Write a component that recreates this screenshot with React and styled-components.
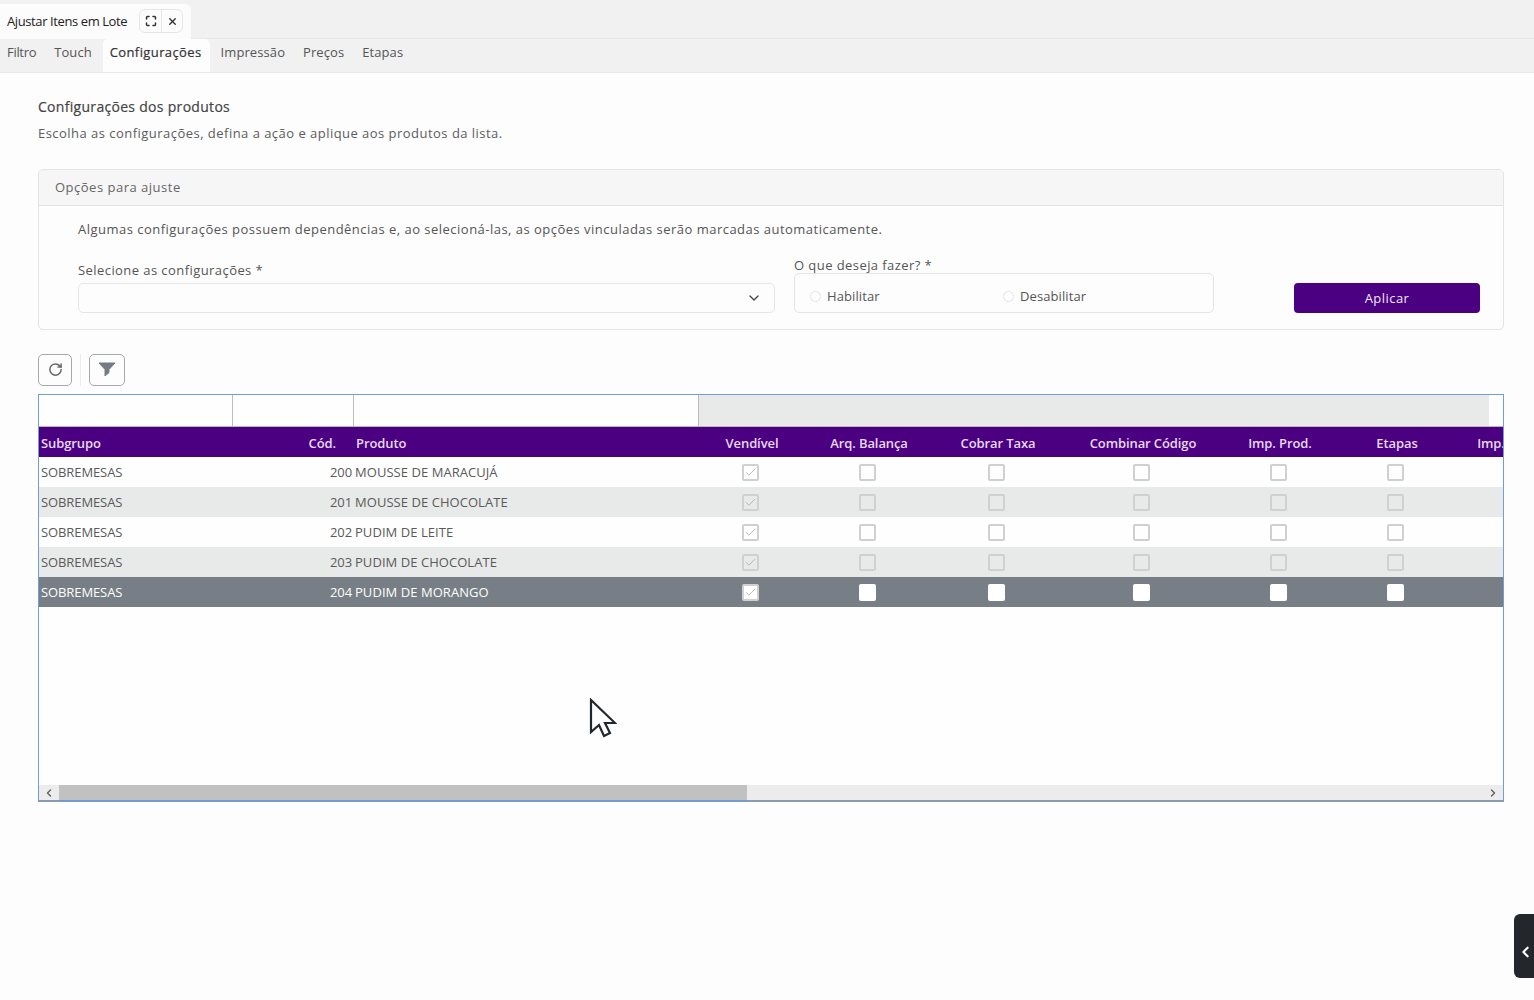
import React from 'react'
import styled, { createGlobalStyle } from 'styled-components'
import { ChevronDown, ChevronLeft, ChevronRight, Check, RotateCw, Maximize, X } from 'lucide-react'

const GlobalStyle = createGlobalStyle`
  html, body {
    margin: 0;
    padding: 0;
    background: #fdfdfd;
  }
  body {
    font-family: "Open Sans", "Liberation Sans", sans-serif;
    color: #444;
  }
  * { box-sizing: border-box; }
`

const columns = [
  { key: 'vendivel', label: 'Vendível', width: 104 },
  { key: 'arq', label: 'Arq. Balança', width: 130 },
  { key: 'taxa', label: 'Cobrar Taxa', width: 128 },
  { key: 'combinar', label: 'Combinar Código', width: 162 },
  { key: 'prod', label: 'Imp. Prod.', width: 112 },
  { key: 'etapas', label: 'Etapas', width: 122 },
  { key: 'imp', label: 'Imp.', width: 66 },
]

const products = [
  { code: 200, name: 'MOUSSE DE MARACUJÁ' },
  { code: 201, name: 'MOUSSE DE CHOCOLATE' },
  { code: 202, name: 'PUDIM DE LEITE' },
  { code: 203, name: 'PUDIM DE CHOCOLATE' },
  { code: 204, name: 'PUDIM DE MORANGO', selected: true },
]

const gridColumns = `194px 121px 344px ${columns.map((c) => `${c.width}px`).join(' ')}`

const App = () => {
  return (
    <Page>
      <GlobalStyle />
      <TitleBar>
        <WindowTab>
          <WindowTitle>Ajustar Itens em Lote</WindowTitle>
          <WindowActions>
            <WindowAction><Maximize size={12} strokeWidth={3} /></WindowAction>
            <WindowAction><X size={11} strokeWidth={3} /></WindowAction>
          </WindowActions>
        </WindowTab>
      </TitleBar>
      <TabBar>
        <Tab>Filtro</Tab>
        <Tab>Touch</Tab>
        <Tab $active>Configurações</Tab>
        <Tab>Impressão</Tab>
        <Tab>Preços</Tab>
        <Tab>Etapas</Tab>
      </TabBar>

      <Content>
        <Heading>Configurações dos produtos</Heading>
        <Subheading>Escolha as configurações, defina a ação e aplique aos produtos da lista.</Subheading>

        <OptionsCard>
          <CardHeader>Opções para ajuste</CardHeader>
          <CardBody>
            <Notice>Algumas configurações possuem dependências e, ao selecioná-las, as opções vinculadas serão marcadas automaticamente.</Notice>
            <FormRow>
              <SelectField>
                <FieldLabel>Selecione as configurações *</FieldLabel>
                <SelectBox>
                  <ChevronDown size={16} color="#444" />
                </SelectBox>
              </SelectField>
              <ActionField>
                <FieldLabel>O que deseja fazer? *</FieldLabel>
                <RadioBox>
                  <RadioOption><RadioDot />Habilitar</RadioOption>
                  <RadioOption><RadioDot />Desabilitar</RadioOption>
                </RadioBox>
              </ActionField>
              <ApplyButton>Aplicar</ApplyButton>
            </FormRow>
          </CardBody>
        </OptionsCard>

        <Toolbar>
          <ToolButton><RotateCw size={15} color="#6a6a6a" strokeWidth={2.4} /></ToolButton>
          <ToolDivider />
          <ToolButton $wide>
            <svg width="18" height="15" viewBox="0 0 18 15">
              <path d="M1 1h16l-6 6.500v3l-4 3.500v-6.500z" fill="#747b84" stroke="#747b84" strokeLinejoin="round" />
            </svg>
          </ToolButton>
        </Toolbar>

        <GridPanel>
          <GridScroll>
            <FilterRow>
              <FilterCell $width={194} />
              <FilterCell $width={121} />
              <FilterCell $width={345} />
              <FilterFill />
            </FilterRow>
            <HeaderRow>
              <HeaderCell>Subgrupo</HeaderCell>
              <HeaderCell $align="right">Cód.</HeaderCell>
              <HeaderCell $indent>Produto</HeaderCell>
              {columns.map((c) => (
                <HeaderCell key={c.key} $align="center">{c.label}</HeaderCell>
              ))}
            </HeaderRow>
            {products.map((p, i) => (
              <DataRow key={p.code} $striped={i % 2 === 1} $selected={p.selected}>
                <DataCell>SOBREMESAS</DataCell>
                <DataCell $align="right">{p.code}</DataCell>
                <DataCell $name>{p.name}</DataCell>
                {columns.map((c, n) => (
                  <CheckCell key={c.key}>
                    {n < 6 && (
                      <CheckBox $selected={p.selected} $locked={n === 0}>
                        {n === 0 && <Check size={13} color="#a4a4a4" strokeWidth={1.4} />}
                      </CheckBox>
                    )}
                  </CheckCell>
                ))}
              </DataRow>
            ))}
          </GridScroll>
          <ScrollBar>
            <ScrollArrow><ChevronLeft size={12} strokeWidth={3} /></ScrollArrow>
            <ScrollTrack>
              <ScrollThumb />
            </ScrollTrack>
            <ScrollArrow><ChevronRight size={12} strokeWidth={3} /></ScrollArrow>
          </ScrollBar>
        </GridPanel>
      </Content>

      <Pointer width="28" height="40" viewBox="0 0 28 40">
        <path d="M2 2v32l8-7 5 11 6-3-5-10h10z" fill="#fff" stroke="#22272b" strokeWidth="2.2" strokeLinejoin="miter" />
      </Pointer>
      <SideHandle><ChevronLeft size={20} color="#fff" strokeWidth={3} /></SideHandle>
    </Page>
  )
}

export default App

const Page = styled.div`
  position: relative;
  width: 1534px;
  height: 1000px;
  overflow: hidden;
  background: #fdfdfd;
`

const TitleBar = styled.div`
  height: 39px;
  padding-top: 4px;
  background: #f1f1f1;
  border-bottom: 1px solid #e8e8e8;
`

const WindowTab = styled.div`
  width: 191px;
  height: 35px;
  padding: 0 8px 0 7px;
  display: flex;
  align-items: center;
  justify-content: space-between;
  background: #fcfcfc;
  border-radius: 0 6px 0 0;
`

const WindowTitle = styled.span`
  margin-top: -2px;
  font-size: 13px;
  letter-spacing: -0.4px;
  color: #222;
  white-space: nowrap;
`

const WindowActions = styled.div`
  display: flex;
  height: 24px;
  margin-top: -1px;
  border: 1px solid #e6e6e6;
  border-radius: 6px;
`

const WindowAction = styled.span`
  width: 21px;
  display: flex;
  align-items: center;
  justify-content: center;
  color: #333;
  & + & {
    border-left: 1px solid #e6e6e6;
  }
`

const TabBar = styled.div`
  height: 34px;
  display: flex;
  align-items: flex-end;
  background: #f1f1f1;
  border-bottom: 1px solid #e9e9e9;
`

const Tab = styled.div`
  height: 33px;
  padding: 0 ${(p) => (p.$active ? '8px' : '7px')} 8px 7px;
  margin-right: 3.9px;
  display: flex;
  align-items: center;
  font-size: 13px;
  letter-spacing: ${(p) => (p.$active ? '0.4px' : '0.1px')};
  color: ${(p) => (p.$active ? '#333' : '#555')};
  background: ${(p) => (p.$active ? '#fdfdfd' : 'transparent')};
  border-radius: ${(p) => (p.$active ? '5px 5px 0 0' : '0')};
  -webkit-text-stroke: ${(p) => (p.$active ? '0.2px #333' : '0')};
  &:first-child {
    letter-spacing: -0.3px;
  }
`

const Content = styled.div`
  padding: 24px 30px 0 38px;
`

const Heading = styled.h1`
  margin: 0;
  font-size: 14px;
  line-height: 20px;
  font-weight: 400;
  letter-spacing: 0.3px;
  color: #444;
  -webkit-text-stroke: 0.2px #444;
`

const Subheading = styled.p`
  margin: 7px 0 0;
  font-size: 13px;
  line-height: 18px;
  letter-spacing: 0.47px;
  color: #5c5c5c;
`

const OptionsCard = styled.section`
  margin-top: 27px;
  height: 161px;
  border: 1px solid #e4e4e4;
  border-radius: 5px;
  overflow: hidden;
`

const CardHeader = styled.div`
  height: 36px;
  padding: 0 0 2px 16px;
  display: flex;
  align-items: center;
  font-size: 13px;
  letter-spacing: 0.5px;
  color: #666;
  background: #f6f6f6;
  border-bottom: 1px solid #e2e2e2;
`

const CardBody = styled.div`
  padding: 14px 23px 0 39px;
`

const Notice = styled.p`
  margin: 0;
  font-size: 13px;
  line-height: 18px;
  letter-spacing: 0.48px;
  color: #555;
`

const FormRow = styled.div`
  margin-top: 18px;
  display: flex;
  align-items: flex-end;
`

const SelectField = styled.div`
  width: 697px;
  margin-right: 19px;
`

const ActionField = styled.div`
  width: 420px;
  margin-right: 80px;
`

const FieldLabel = styled.div`
  margin-bottom: 4px;
  font-size: 13px;
  line-height: 18px;
  letter-spacing: 0.43px;
  color: #555;
`

const SelectBox = styled.div`
  height: 30px;
  padding-right: 12px;
  display: flex;
  align-items: center;
  justify-content: flex-end;
  border: 1px solid #e6e6e6;
  border-radius: 5px;
  background: #fdfdfd;
`

const RadioBox = styled.div`
  height: 40px;
  margin-top: -5px;
  padding: 6px 0 0 15px;
  display: flex;
  align-items: center;
  border: 1px solid #e4e4e4;
  border-radius: 5px;
`

const RadioOption = styled.label`
  width: 193px;
  display: flex;
  align-items: center;
  gap: 6px;
  font-size: 13px;
  letter-spacing: 0.1px;
  color: #555;
`

const RadioDot = styled.span`
  width: 11px;
  height: 11px;
  border: 1px solid #e4e4e4;
  border-radius: 50%;
`

const ApplyButton = styled.button`
  width: 186px;
  height: 30px;
  padding: 0;
  border: 0;
  border-radius: 4px;
  background: #4b0082;
  color: #f1e9f7;
  font: inherit;
  font-size: 13px;
  letter-spacing: 0.45px;
`

const Toolbar = styled.div`
  margin: 24px 0 8px;
  height: 32px;
  display: flex;
  align-items: center;
`

const ToolButton = styled.div`
  width: ${(p) => (p.$wide ? '36px' : '34px')};
  height: 32px;
  padding-bottom: 2px;
  display: flex;
  align-items: center;
  justify-content: center;
  border: 1.5px solid #a9a9a9;
  border-radius: 5px;
  background: #fdfdfd;
`

const ToolDivider = styled.span`
  width: 1px;
  height: 32px;
  margin: 0 8px;
  background: #ececec;
`

const GridPanel = styled.div`
  height: 408px;
  display: flex;
  flex-direction: column;
  border: 1px solid #6f9fd8;
  border-bottom: 2px solid #8a9bb0;
  background: #fefefe;
`

const GridScroll = styled.div`
  flex: 1;
  overflow: hidden;
`

const FilterRow = styled.div`
  height: 32px;
  display: flex;
  border-bottom: 1px solid #b9b9b9;
`

const FilterCell = styled.div`
  width: ${(p) => p.$width}px;
  background: #fefefe;
  border-right: 1px solid #bcbcbc;
`

const FilterFill = styled.div`
  width: 790px;
  background: #e8e9e9;
`

const HeaderRow = styled.div`
  height: 30px;
  padding-top: 2px;
  display: grid;
  grid-template-columns: ${gridColumns};
  align-items: center;
  background: #4b0082;
`

const alignToFlex = { right: 'flex-end', center: 'center' }

const HeaderCell = styled.div`
  display: flex;
  justify-content: ${(p) => alignToFlex[p.$align] || 'flex-start'};
  padding: ${(p) => (p.$align === 'center' ? '0 0 0 4px' : p.$indent ? '0 0 0 2px' : '0 2px')};
  padding-right: ${(p) => (p.$align === 'right' ? '18px' : '')};
  font-size: 13px;
  font-weight: 600;
  letter-spacing: -0.1px;
  color: #e6d9ef;
  white-space: nowrap;
`

const DataRow = styled.div`
  height: 30px;
  display: grid;
  grid-template-columns: ${gridColumns};
  align-items: center;
  background: ${(p) => (p.$selected ? '#777e85' : p.$striped ? '#e8e9e9' : '#fefefe')};
  color: ${(p) => (p.$selected ? '#fff' : '#5a5a5a')};
`

const DataCell = styled.div`
  padding: ${(p) => (p.$name ? '0 0 0 1px' : '0 2px')};
  text-align: ${(p) => p.$align || 'left'};
  font-size: 13px;
  letter-spacing: ${(p) => (p.$name ? '0.05px' : '-0.1px')};
  white-space: nowrap;
`

const CheckCell = styled.div`
  display: flex;
  justify-content: center;
`

const CheckBox = styled.span`
  width: 17px;
  height: 17px;
  display: flex;
  align-items: center;
  justify-content: center;
  border: 2px solid ${(p) => (p.$selected && !p.$locked ? '#fff' : '#d0d0d0')};
  border-radius: 2px;
  background: ${(p) => (p.$selected ? '#fff' : 'transparent')};
`

const ScrollBar = styled.div`
  height: 15px;
  display: flex;
  align-items: center;
  background: #ececec;
`

const ScrollArrow = styled.span`
  width: 20px;
  height: 15px;
  display: flex;
  align-items: center;
  justify-content: center;
  color: #666;
`

const ScrollTrack = styled.div`
  flex: 1;
  height: 15px;
`

const ScrollThumb = styled.div`
  width: 688px;
  height: 15px;
  background: #c1c1c1;
  box-shadow: 0 1px 0 #5b9df0;
`

const Pointer = styled.svg`
  position: absolute;
  left: 589px;
  top: 698px;
`

const SideHandle = styled.div`
  position: absolute;
  right: 0;
  top: 914px;
  width: 20px;
  height: 64px;
  padding: 12px 0 0 3px;
  display: flex;
  align-items: center;
  background: #23272b;
  border-radius: 6px 0 0 6px;
`
